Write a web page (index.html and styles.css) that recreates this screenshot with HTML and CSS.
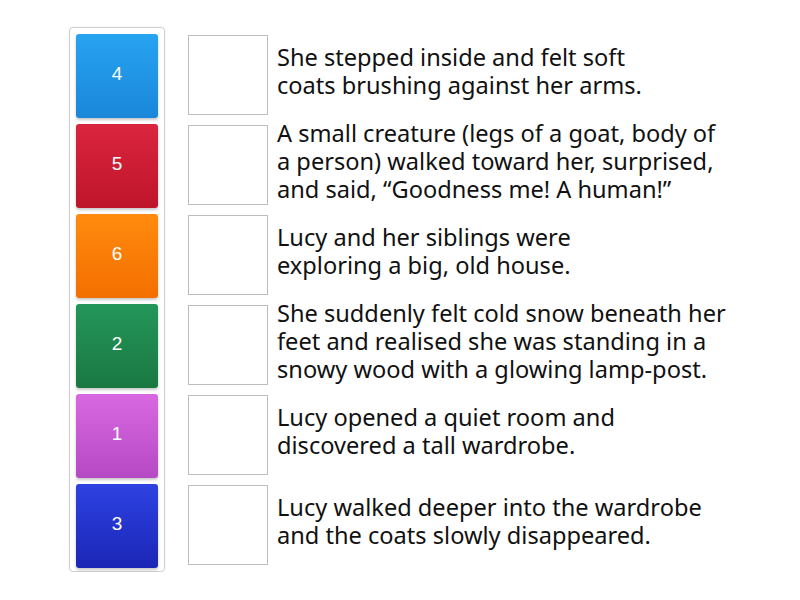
FILE: index.html
```html
<!DOCTYPE html>
<html>
<head>
<meta charset="utf-8">
<link rel="stylesheet" href="styles.css">
</head>
<body>
<div class="game">
  <div class="tiles">
    <div class="tile t-blue">4</div>
    <div class="tile t-red">5</div>
    <div class="tile t-orange">6</div>
    <div class="tile t-green">2</div>
    <div class="tile t-purple">1</div>
    <div class="tile t-navy">3</div>
  </div>
  <div class="rows">
    <div class="row"><div class="slot"></div><div class="text">She stepped inside and felt soft<br>coats brushing against her arms.</div></div>
    <div class="row"><div class="slot"></div><div class="text">A small creature (legs of a goat, body of<br>a person) walked toward her, surprised,<br>and said, “Goodness me! A human!”</div></div>
    <div class="row"><div class="slot"></div><div class="text">Lucy and her siblings were<br>exploring a big, old house.</div></div>
    <div class="row"><div class="slot"></div><div class="text">She suddenly felt cold snow beneath her<br>feet and realised she was standing in a<br>snowy wood with a glowing lamp-post.</div></div>
    <div class="row"><div class="slot"></div><div class="text">Lucy opened a quiet room and<br>discovered a tall wardrobe.</div></div>
    <div class="row"><div class="slot"></div><div class="text">Lucy walked deeper into the wardrobe<br>and the coats slowly disappeared.</div></div>
  </div>
</div>
</body>
</html>
```
FILE: styles.css
```css
html, body {
  margin: 0;
  padding: 0;
  background: #ffffff;
}
.game {
  display: flex;
  align-items: flex-start;
  padding: 27px 0 0 69px;
  gap: 23px;
}
.tiles {
  display: flex;
  flex-direction: column;
  gap: 6px;
  padding: 6px 6px 3px 6px;
  border: 1px solid #cfcfcf;
  border-radius: 4px;
  box-shadow: 0 0 2px rgba(0,0,0,0.08);
}
.tile {
  width: 82px;
  height: 84px;
  box-sizing: border-box;
  padding-bottom: 4px;
  border-radius: 3px;
  display: flex;
  align-items: center;
  justify-content: center;
  color: #ffffff;
  font-family: "Liberation Sans", Arial, sans-serif;
  font-size: 19px;
  box-shadow: 0 2px 3px rgba(0,0,0,0.22);
}
.t-blue   { background: linear-gradient(#27a4f1, #1a86da); }
.t-red    { background: linear-gradient(#da253e, #be1529); }
.t-orange { background: linear-gradient(#ff8b0e, #f36f00); }
.t-green  { background: linear-gradient(#249659, #1a7841); }
.t-purple { background: linear-gradient(#d868e2, #b64ac4); }
.t-navy   { background: linear-gradient(#2e42e2, #1a26b6); }
.rows {
  display: flex;
  flex-direction: column;
  gap: 10px;
  margin-top: 8px;
}
.row {
  display: flex;
  align-items: center;
  height: 80px;
}
.slot {
  width: 78px;
  height: 78px;
  border: 1px solid #bdbdbd;
  flex: none;
}
.text {
  margin-left: 9px;
  padding-bottom: 8px;
  font-family: "Noto Sans", sans-serif;
  font-size: 23.6px;
  line-height: 28px;
  color: #111111;
  white-space: nowrap;
}
```
